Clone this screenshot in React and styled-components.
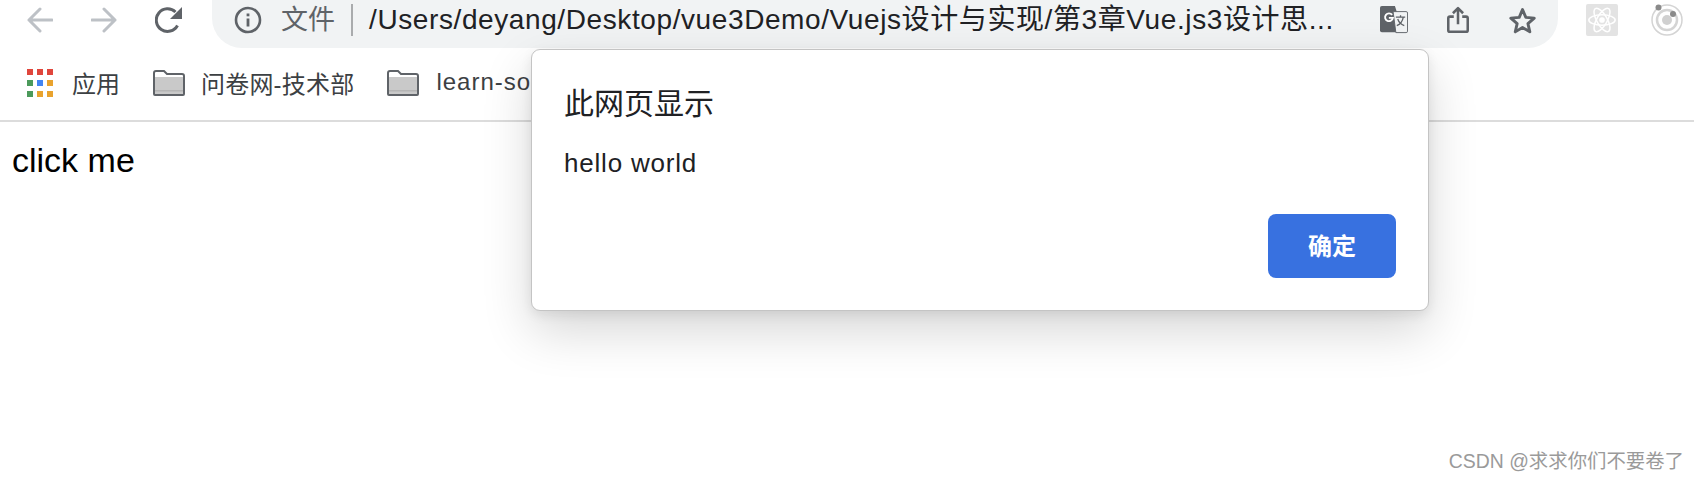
import styled, { createGlobalStyle } from "styled-components";

const GlobalStyle = createGlobalStyle`
  html, body { margin: 0; padding: 0; background: #fff; overflow: hidden; }
  body { font-family: "Liberation Sans", "Noto Sans CJK SC", sans-serif; }
`;

const Page = styled.div`
  position: relative;
  width: 1694px;
  height: 480px;
  overflow: hidden;
`;

const Toolbar = styled.div`
  display: flex;
  align-items: flex-start;
  height: 48px;
  padding-left: 27px;
  box-sizing: border-box;
`;

const NavGroup = styled.div`
  display: flex;
  align-items: center;
  gap: 38px;
  height: 40px;
  width: 185px;
  flex: none;
`;

const Omnibox = styled.div`
  display: flex;
  align-items: center;
  width: 1346px;
  height: 48px;
  padding: 0 21px 8px 22px;
  box-sizing: border-box;
  background: #f1f3f4;
  border-radius: 0 0 30px 30px;
  flex: none;
`;

const SecurityLabel = styled.span`
  margin-left: 19px;
  font-size: 27px;
  line-height: 30px;
  color: #5f6368;
`;

const Separator = styled.span`
  width: 2px;
  height: 32px;
  margin: 0 16px;
  background: #a9abad;
`;

const Url = styled.span`
  font-size: 28px;
  line-height: 32px;
  letter-spacing: 0.6px;
  color: #202124;
  white-space: nowrap;
`;

const BoxActions = styled.div`
  display: flex;
  align-items: center;
  gap: 39px;
  margin-left: auto;
`;

const Extensions = styled.div`
  display: flex;
  align-items: center;
  gap: 33px;
  height: 40px;
  margin-left: 28px;
`;

const Bookmarks = styled.div`
  display: flex;
  align-items: center;
  height: 74px;
  padding: 0 0 2px 27px;
  border-bottom: 2px solid #dcdcdc;
  box-sizing: border-box;
`;

const Bookmark = styled.div`
  display: flex;
  align-items: center;
  gap: ${(p) => p.$gap}px;
  margin-right: 33px;
`;

const BookmarkLabel = styled.span`
  padding-bottom: 2px;
  font-size: 24px;
  letter-spacing: ${(p) => p.$spacing || 0}px;
  color: #3c4043;
  white-space: nowrap;
`;

const Content = styled.div`
  padding: 20px 12px;
  font-size: 34px;
  line-height: 37px;
  color: #000;
`;

const Dialog = styled.div`
  position: absolute;
  left: 531px;
  top: 49px;
  width: 898px;
  height: 262px;
  box-sizing: border-box;
  padding: 36px 32px 32px 32px;
  display: flex;
  flex-direction: column;
  background: #fff;
  border: 1px solid #c4c4c4;
  border-radius: 9px;
  box-shadow: 0 20px 50px rgba(0, 0, 0, 0.16), 0 4px 12px rgba(0, 0, 0, 0.08);
`;

const DialogTitle = styled.div`
  font-size: 30px;
  line-height: 36px;
  color: #202124;
`;

const DialogMessage = styled.div`
  margin-top: 26px;
  font-size: 26px;
  line-height: 30px;
  letter-spacing: 0.8px;
  color: #202124;
`;

const DialogFooter = styled.div`
  display: flex;
  justify-content: flex-end;
  margin-top: auto;
`;

const ConfirmButton = styled.button`
  width: 128px;
  height: 64px;
  padding: 0 0 4px;
  border: 0;
  border-radius: 8px;
  background: #3871e0;
  color: #fff;
  font-family: inherit;
  font-size: 24px;
  font-weight: 700;
`;

const Watermark = styled.div`
  position: absolute;
  right: 10px;
  top: 449px;
  font-size: 19.4px;
  line-height: 24px;
  color: #9a9a9a;
  white-space: nowrap;
`;

const ArrowIcon = ({ dir }) => (
  <svg width="26" height="26" viewBox="0 0 26 26" fill="none" stroke="#bdc1c6" strokeWidth="3" strokeLinecap="round" strokeLinejoin="round">
    {dir === "left" ? <path d="M25 13H2M13 2 2 13l11 11" /> : <path d="M1 13h23M13 2l11 11-11 11" />}
  </svg>
);

const ReloadIcon = () => (
  <svg width="28" height="28" viewBox="0 0 28 28" fill="none">
    <path d="M22.5 19.5A11.3 11.3 0 1 1 20.5 6" stroke="#5f6368" strokeWidth="3" />
    <path d="M27 1v12H15z" fill="#5f6368" />
  </svg>
);

const InfoIcon = () => (
  <svg width="28" height="28" viewBox="0 0 28 28" fill="none">
    <circle cx="14" cy="14" r="12" stroke="#5f6368" strokeWidth="2.6" />
    <rect x="12.6" y="12.5" width="2.8" height="8" fill="#5f6368" />
    <rect x="12.6" y="7.5" width="2.8" height="2.8" fill="#5f6368" />
  </svg>
);

const TranslateIcon = () => (
  <svg width="28" height="28" viewBox="0 0 30 30">
    <path d="M2 0h14l9 28H2a2 2 0 0 1-2-2V2a2 2 0 0 1 2-2z" fill="#5f6368" />
    <path d="M14 6h14a1.500 1.500 0 0 1 1.500 1.500V27a1.500 1.500 0 0 1-1.500 1.500H17z" fill="#f1f3f4" stroke="#5f6368" strokeWidth="1" />
    <path d="M13 9.500a4.200 4.200 0 1 0 .8 3.200H9.500" fill="none" stroke="#fff" strokeWidth="2" />
    <path d="M17 12h10M22 10v2M25 12c-1 5-4 8-7 9M19 14c1 3 4 6 7 7" fill="none" stroke="#5f6368" strokeWidth="1.400" />
  </svg>
);

const ShareIcon = () => (
  <svg width="22" height="28" viewBox="0 0 26 32" fill="none" stroke="#5f6368" strokeWidth="3" strokeLinejoin="round">
    <path d="M8 12H3.500A2 2 0 0 0 1.500 14v14a2 2 0 0 0 2 2h19a2 2 0 0 0 2-2V14a2 2 0 0 0-2-2H18" />
    <path d="M13 21V2.500M7 8l6-6 6 6" />
  </svg>
);

const StarIcon = () => (
  <svg width="29" height="28" viewBox="0 0 32 30" fill="none">
    <path d="M16 3.500l3.700 8.600 9.300.8-7 6.100 2.100 9.100-8.100-4.800-8 4.800 2.100-9.100-7-6.100 9.300-.8z" stroke="#5f6368" strokeWidth="3.200" strokeLinejoin="round" />
  </svg>
);

const ReactExtIcon = () => (
  <svg width="32" height="32" viewBox="0 0 34 34">
    <rect width="34" height="34" rx="2" fill="#e3e3e3" />
    <g fill="none" stroke="#fff" strokeWidth="1.600">
      <ellipse cx="17" cy="17" rx="14" ry="5.500" />
      <ellipse cx="17" cy="17" rx="14" ry="5.500" transform="rotate(60 17 17)" />
      <ellipse cx="17" cy="17" rx="14" ry="5.500" transform="rotate(120 17 17)" />
    </g>
    <circle cx="17" cy="17" r="3" fill="#fff" />
  </svg>
);

const RingExtIcon = () => (
  <svg width="32" height="32" viewBox="0 0 32 32" fill="none">
    <circle cx="16" cy="16" r="15" stroke="#d4d4d4" strokeWidth="1.500" />
    <circle cx="16" cy="16" r="10" stroke="#d4d4d4" strokeWidth="2.500" />
    <circle cx="16" cy="16" r="5" fill="#d0d0d0" />
    <circle cx="7.500" cy="3.500" r="3" fill="#8a8a8a" />
    <circle cx="22" cy="10" r="3" fill="#8a8a8a" />
  </svg>
);

const appsColors = ["#e0463c", "#e0463c", "#e0463c", "#4b9a5b", "#4285f4", "#e9a32e", "#4b9a5b", "#e9a32e", "#e9a32e"];

const AppsIcon = () => (
  <svg width="26" height="28" viewBox="0 0 26 28">
    {appsColors.map((c, i) => (
      <rect key={i} x={(i % 3) * 10} y={Math.floor(i / 3) * 11} width="6" height="6" fill={c} />
    ))}
  </svg>
);

const FolderIcon = () => (
  <svg width="32" height="26" viewBox="0 0 32 26">
    <path d="M1 24V3a2 2 0 0 1 2-2h8l3 3h15a2 2 0 0 1 2 2v18a1 1 0 0 1-1 1H2a1 1 0 0 1-1-1z" fill="#fff" stroke="#5f6368" strokeWidth="2" />
    <rect x="2" y="7" width="28" height="17" fill="#c9c9c9" />
    <rect x="2" y="20" width="28" height="1.500" fill="#b4b4b4" />
  </svg>
);

export default function App() {
  return (
    <Page>
      <GlobalStyle />
      <Toolbar>
        <NavGroup>
          <ArrowIcon dir="left" />
          <ArrowIcon dir="right" />
          <ReloadIcon />
        </NavGroup>
        <Omnibox>
          <InfoIcon />
          <SecurityLabel>文件</SecurityLabel>
          <Separator />
          <Url>/Users/deyang/Desktop/vue3Demo/Vuejs设计与实现/第3章Vue.js3设计思...</Url>
          <BoxActions>
            <TranslateIcon />
            <ShareIcon />
            <StarIcon />
          </BoxActions>
        </Omnibox>
        <Extensions>
          <ReactExtIcon />
          <RingExtIcon />
        </Extensions>
      </Toolbar>
      <Bookmarks>
        <Bookmark $gap={19}>
          <AppsIcon />
          <BookmarkLabel>应用</BookmarkLabel>
        </Bookmark>
        <Bookmark $gap={16}>
          <FolderIcon />
          <BookmarkLabel $spacing={0.2}>问卷网-技术部</BookmarkLabel>
        </Bookmark>
        <Bookmark $gap={17}>
          <FolderIcon />
          <BookmarkLabel $spacing={1}>learn-so</BookmarkLabel>
        </Bookmark>
      </Bookmarks>
      <Content>click me</Content>
      <Dialog>
        <DialogTitle>此网页显示</DialogTitle>
        <DialogMessage>hello world</DialogMessage>
        <DialogFooter>
          <ConfirmButton>确定</ConfirmButton>
        </DialogFooter>
      </Dialog>
      <Watermark>CSDN @求求你们不要卷了</Watermark>
    </Page>
  );
}
